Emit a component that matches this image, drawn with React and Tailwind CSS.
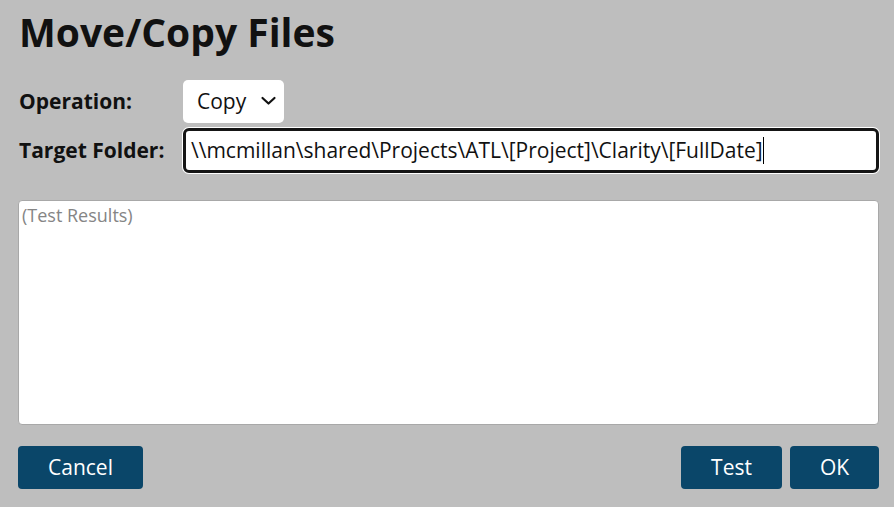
import React from "react";

const font = { fontFamily: '"Open Sans", "Noto Sans", sans-serif' };

export default function App() {
  return (
    <div
      className="w-[894px] h-[507px] bg-[#bebebe] text-[#111111] pl-[18px] pr-[14px] overflow-hidden"
      style={font}
    >
      <h1 className="text-[39px] font-bold leading-none pt-[12px] pl-[1px]">
        Move/Copy Files
      </h1>

      <div className="grid grid-cols-[164px_1fr] items-center mt-[29px] gap-y-[4px]">
        <div className="text-[21px] font-bold pl-[1px]">Operation:</div>
        <div className="flex">
          <div className="relative flex items-center w-[101px] h-[43px] ml-[1px] bg-white rounded-[5px] pl-[14px] text-[21px]">
            Copy
            <svg
              className="absolute right-[7px] top-[15px]"
              width="17"
              height="11"
              viewBox="0 0 17 11"
              fill="none"
              stroke="#111"
              strokeWidth="2.2"
              strokeLinecap="round"
              strokeLinejoin="round"
            >
              <path d="M2.5 3 L8.5 8.5 L14.5 3" />
            </svg>
          </div>
        </div>

        <div className="text-[21px] font-bold pl-[1px]">Target Folder:</div>
        <div className="h-[47px] rounded-[7px] bg-white p-[1px]">
          <div className="h-full flex items-center rounded-[6px] border-[3px] border-[#151515] bg-white pl-[5px] text-[21px] whitespace-nowrap">
            <span>{"\\\\mcmillan\\shared\\Projects\\ATL\\[Project]\\Clarity\\[FullDate]"}</span>
            <span className="inline-block w-[1px] h-[27px] bg-black" />
          </div>
        </div>
      </div>

      <div className="mt-[26px] mr-[1px] h-[225px] bg-white rounded-[4px] border border-[#a8a8a8] px-[3px] pt-[1px] text-[18px] text-[#858585]">
        (Test Results)
      </div>

      <div className="flex items-center mt-[21px]">
        <button className="h-[43px] w-[125px] rounded-[4px] bg-[#0a4669] text-white text-[21px]">
          Cancel
        </button>
        <div className="flex-1" />
        <button className="h-[43px] w-[101px] rounded-[4px] bg-[#0a4669] text-white text-[21px]">
          Test
        </button>
        <button className="h-[43px] w-[89px] ml-[8px] mr-[1px] rounded-[4px] bg-[#0a4669] text-white text-[21px]">
          OK
        </button>
      </div>
    </div>
  );
}
